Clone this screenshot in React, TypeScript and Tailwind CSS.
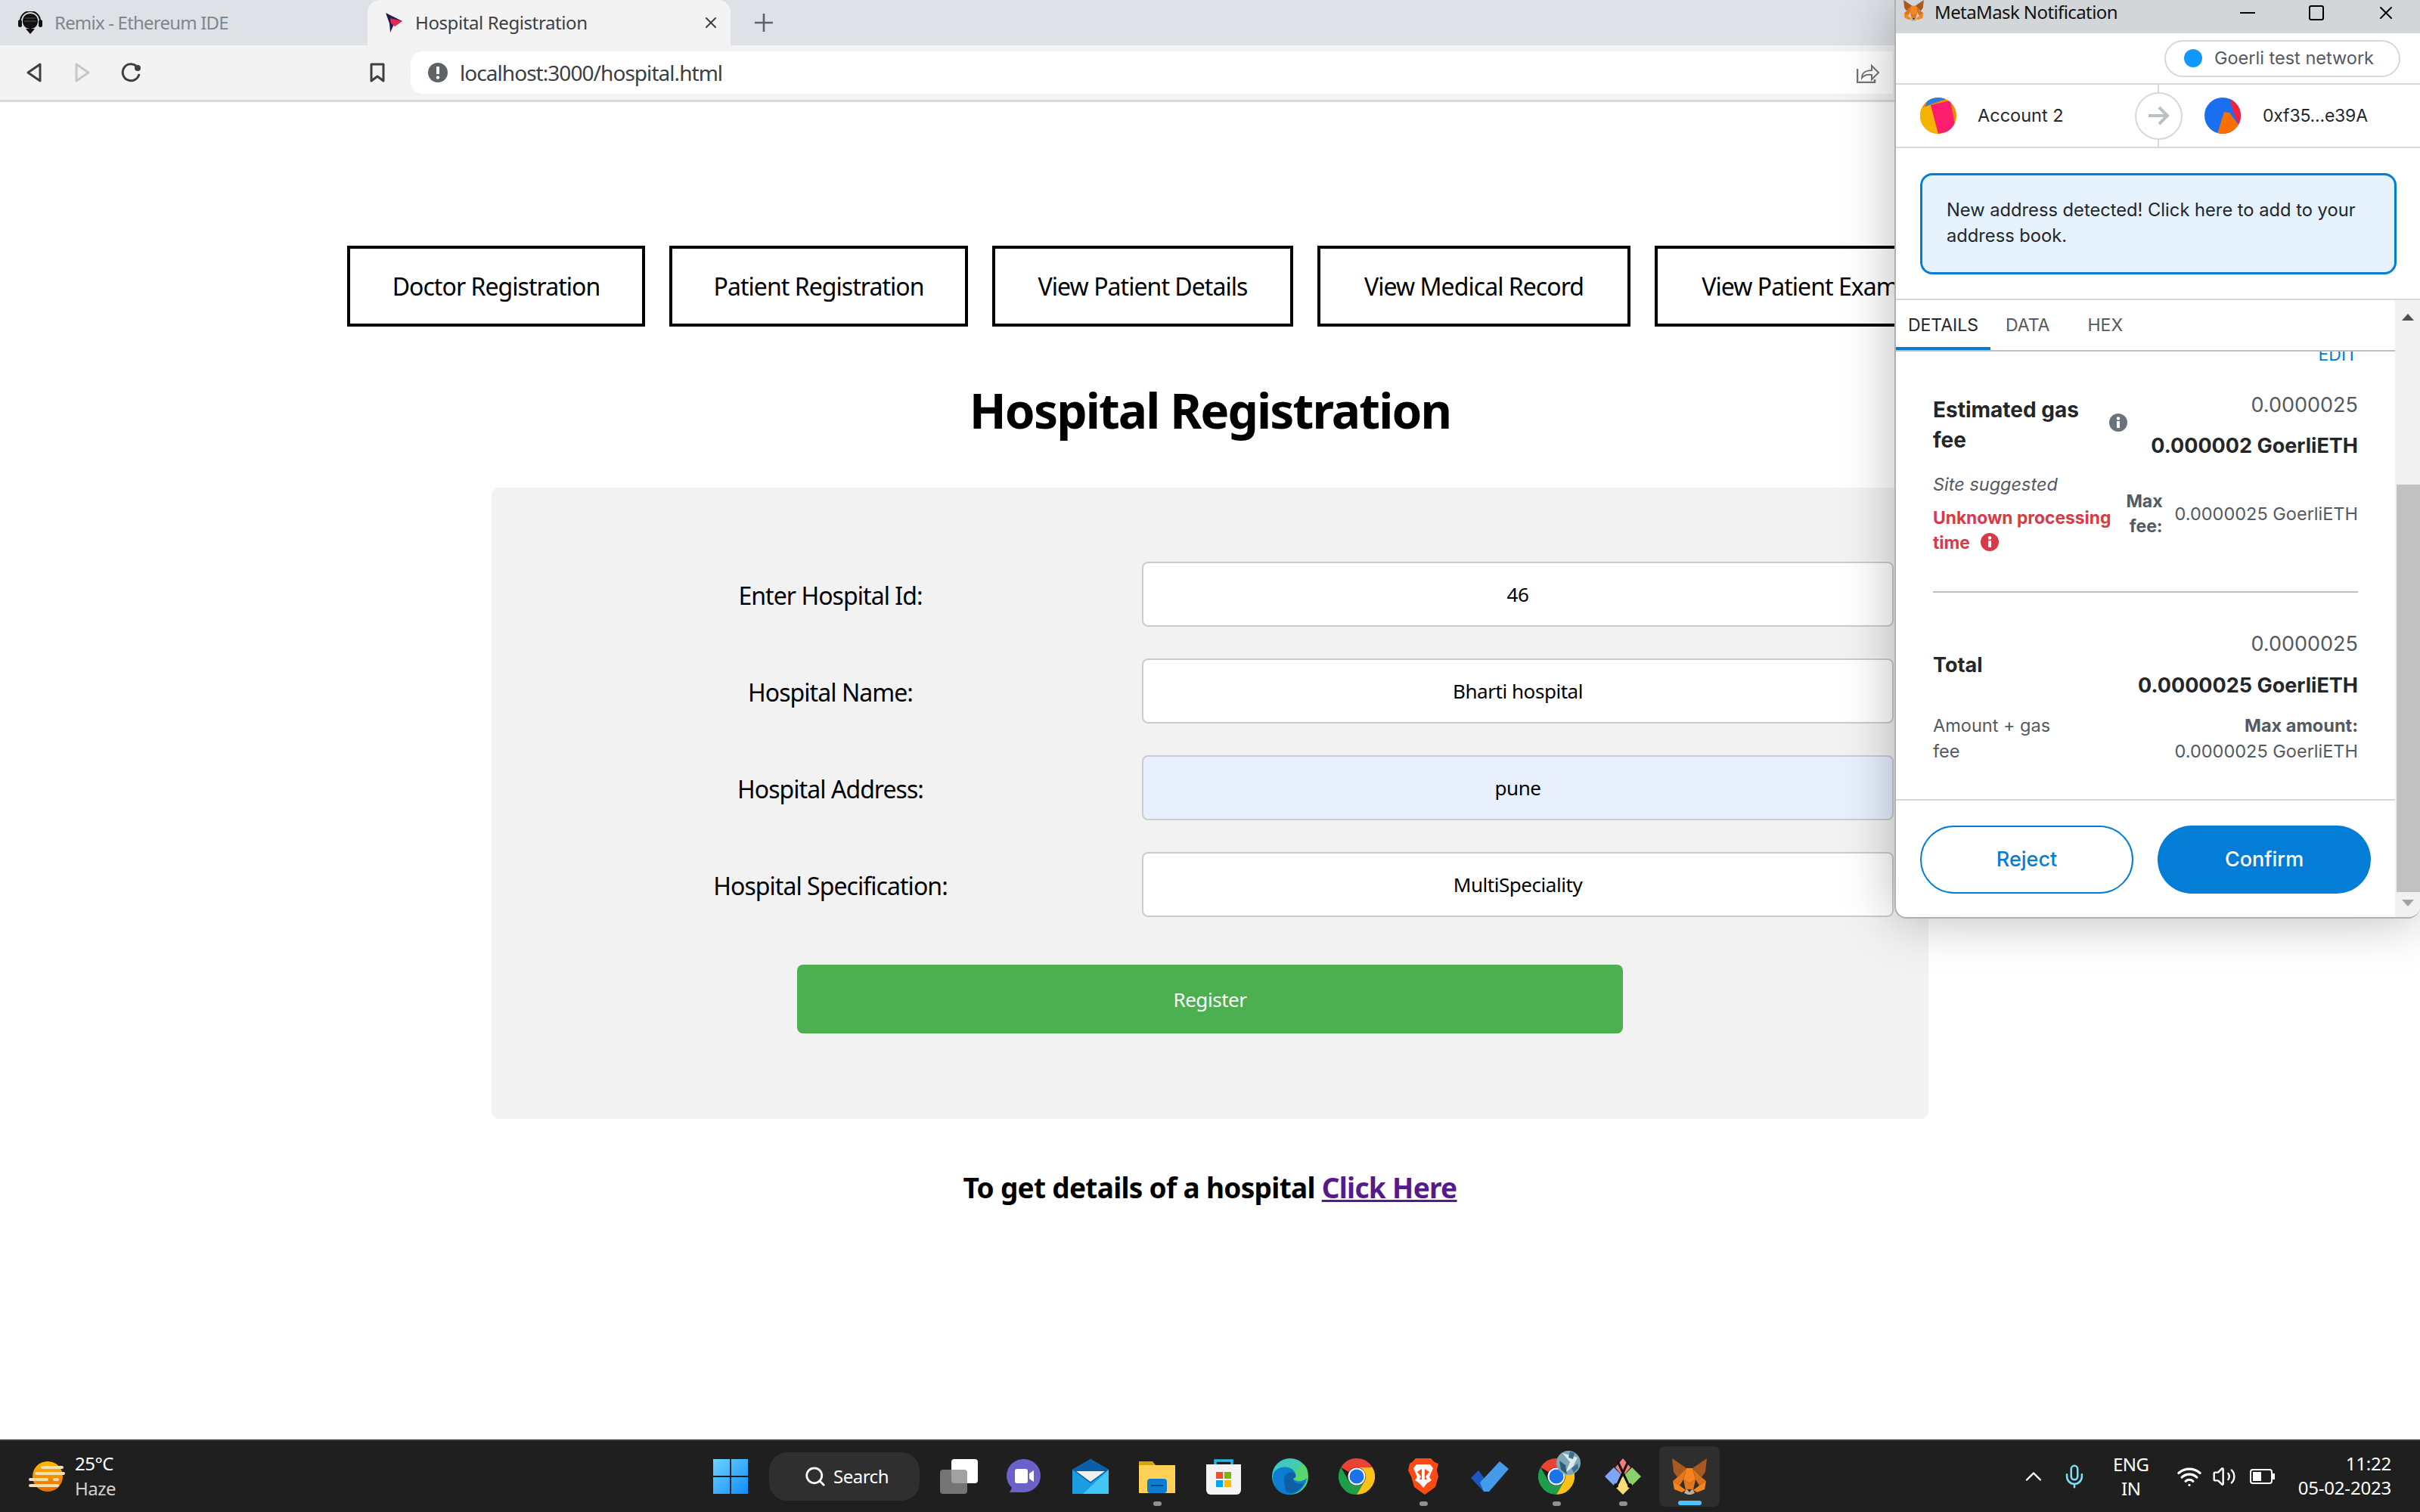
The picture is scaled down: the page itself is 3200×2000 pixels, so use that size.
import React from 'react'
import { ChevronUp, Mic, Search, Volume2, Wifi, X } from 'lucide-react'

function Fox({ className }: { className: string }) {
  return (
    <svg viewBox="0 0 48 48" className={className}>
      <polygon points="1,0 20,13 8,25 3,18" fill="#a9581f" />
      <polygon points="47,0 28,13 40,25 45,18" fill="#a9581f" />
      <polygon points="20,13 28,13 32,28 24,33 16,28" fill="#f5841f" />
      <polygon points="8,25 20,13 16,28 11,36 2,30" fill="#e2761b" />
      <polygon points="40,25 28,13 32,28 37,36 46,30" fill="#d9701a" />
      <polygon points="2,30 11,36 19,42 14,45 4,41" fill="#f6851b" />
      <polygon points="46,30 37,36 29,42 34,45 44,41" fill="#f6851b" />
      <polygon points="16,28 24,33 32,28 29,42 19,42" fill="#e4761b" />
      <polygon points="19,42 29,42 31,46 26,48 22,48 17,46" fill="#c0ad9e" />
      <polygon points="21,41 27,41 24,45" fill="#233447" />
    </svg>
  )
}

function Chrome({ className }: { className: string }) {
  return (
    <svg viewBox="0 0 48 48" className={className}>
      <path d="M24 0A24 24 0 0 1 44.8 12H24a12 12 0 0 0-10.4 6L3.2 12A24 24 0 0 1 24 0z" fill="#ea4335" />
      <path d="M3.2 12A24 24 0 0 0 24 48l10.4-18a12 12 0 0 1-20.8 0z" fill="#1e9e4a" />
      <path d="M44.8 12H24a12 12 0 0 1 10.4 18L24 48A24 24 0 0 0 44.8 12z" fill="#fbc116" />
      <circle cx="24" cy="24" r="11.5" fill="#fff" />
      <circle cx="24" cy="24" r="9.5" fill="#1a73e8" />
    </svg>
  )
}

function InfoDot({ color }: { color: string }) {
  return (
    <svg viewBox="0 0 24 24" className="h-6 w-6 shrink-0">
      <circle cx="12" cy="12" r="12" fill={color} />
      <rect x="10" y="10" width="4" height="9" fill="#fff" />
      <circle cx="12" cy="6.5" r="2.2" fill="#fff" />
    </svg>
  )
}

function Avatar({ which }: { which: 1 | 2 }) {
  return (
    <svg viewBox="0 0 48 48" className="h-12 w-12 shrink-0">
      <clipPath id={`jazz${which}`}>
        <circle cx="24" cy="24" r="24" />
      </clipPath>
      {which === 1 ? (
        <g clipPath="url(#jazz1)">
          <rect width="48" height="48" fill="#f58a00" />
          <polygon points="0,14 14,10 24,48 0,48" fill="#f5b400" />
          <polygon points="14,10 40,4 46,36 40,44 24,48" fill="#fb1d6e" />
          <polygon points="7,12 10,0 34,0 34,2 14,9" fill="#2a7de1" />
        </g>
      ) : (
        <g clipPath="url(#jazz2)">
          <rect width="48" height="48" fill="#1a6ff0" />
          <polygon points="33,0 48,0 48,30 45,36 38,18" fill="#fb1d3a" />
          <polygon points="26,19 33,20 45,36 48,48 17,48" fill="#fb6f00" />
        </g>
      )}
    </svg>
  )
}

function TaskIcon({ children, active, dot }: { children: React.ReactNode; active?: boolean; dot?: boolean }) {
  return (
    <div className={`relative flex h-20 w-20 items-center justify-center rounded-lg ${active ? 'bg-[#2e2e2e]' : ''}`}>
      {children}
      {dot && <div className="absolute bottom-[1px] left-[35px] h-[6px] w-[11px] rounded-full bg-[#8f8f8f]" />}
      {active && <div className="absolute bottom-[2px] left-[25px] h-[6px] w-[31px] rounded-full bg-[#4cc2ff]" />}
    </div>
  )
}

function NavButton({ label, width }: { label: string; width: string }) {
  return (
    <a className={`flex h-[107px] shrink-0 items-center justify-center border-4 border-black pt-[1px] text-[32px] tracking-[-0.95px] text-black ${width}`}>
      {label}
    </a>
  )
}

function FormRow({ label, value, filled }: { label: string; value: string; filled?: boolean }) {
  return (
    <div className="grid grid-cols-[824px_994px] items-center">
      <label className="pt-[4px] text-center text-[32px] tracking-[-0.95px] text-black">{label}</label>
      <input
        readOnly
        defaultValue={value}
        className={`h-[86px] rounded-lg border-2 border-[#ccc] text-center text-[26px] tracking-[-0.45px] text-black outline-none ${filled ? 'bg-[#e8f0fe]' : 'bg-white'}`}
      />
    </div>
  )
}

function BrowserChrome() {
  return (
    <div className="shrink-0">
      <div className="flex h-[60px] items-center bg-[#dee1e6] text-[24px]">
        <div className="flex w-[486px] items-center gap-[16px] pl-[24px] tracking-[-0.8px] text-[#80868b]">
          <svg viewBox="0 0 32 30" className="h-[30px] w-8">
            <path d="M3 13a13 13 0 0 1 26 0" fill="none" stroke="#111" strokeWidth="2" />
            <rect x="0" y="11" width="5" height="10" rx="2.5" fill="#111" />
            <rect x="27" y="11" width="5" height="10" rx="2.5" fill="#111" />
            <path d="M16 3c6 0 10 4 10 10 0 6-4 10-10 10S6 19 6 13C6 7 10 3 16 3z" fill="#111" />
            <path d="M10 23h12l-6 7z" fill="#111" />
            <path d="M9 9h14M8 13h16" stroke="#555" strokeWidth="1" />
          </svg>
          <span>Remix - Ethereum IDE</span>
        </div>
        <div className="flex h-full w-[480px] items-center rounded-t-2xl bg-[#f3f3f3] pl-[20px] tracking-[-0.4px] text-[#3c4043]">
          <svg viewBox="0 0 28 28" className="mr-[15px] h-7 w-7">
            <polygon points="4,1 26,12 15,16 10,27 9,15" fill="#1f1d4d" />
            <polygon points="10,8 26,12 16,19 11,15" fill="#e8264f" />
          </svg>
          <span className="w-[379px]">Hospital Registration</span>
          <X size={24} color="#3c4043" strokeWidth={2} />
        </div>
        <svg viewBox="0 0 24 24" className="ml-[32px] h-6 w-6" stroke="#5f6368" strokeWidth="2.6">
          <path d="M12 0v24M0 12h24" />
        </svg>
      </div>
      <div className="flex h-[75px] items-center border-b-[3px] border-[#d8dadd] bg-[#f3f3f3]">
        <svg viewBox="0 0 20 26" className="ml-[35px] h-[26px] w-5" fill="none" stroke="#3c4043" strokeWidth="3" strokeLinejoin="round">
          <path d="M18 2v22L2 13z" />
        </svg>
        <svg viewBox="0 0 20 26" className="ml-[44px] h-[26px] w-5" fill="none" stroke="#c4c7cb" strokeWidth="3" strokeLinejoin="round">
          <path d="M2 2v22l16-11z" />
        </svg>
        <svg viewBox="0 0 28 26" className="ml-[41px] h-[26px] w-7" fill="none" stroke="#3c4043" strokeWidth="3">
          <path d="M20 4A11 11 0 1 0 24 15" />
          <circle cx="22" cy="7" r="4" fill="#3c4043" stroke="none" />
        </svg>
        <svg viewBox="0 0 20 26" className="ml-[301px] h-[26px] w-5" fill="none" stroke="#3c4043" strokeWidth="3" strokeLinejoin="round">
          <path d="M2 2h16v22l-8-6-8 6z" />
        </svg>
        <div className="ml-[34px] flex h-14 w-[1960px] items-center rounded-l-2xl bg-white pl-[23px] text-[28px] tracking-[-0.95px] text-[#3c4043]">
          <svg viewBox="0 0 26 26" className="mr-[16px] h-[26px] w-[26px]">
            <circle cx="13" cy="13" r="13" fill="#5f6368" />
            <rect x="11" y="5" width="4" height="10" fill="#f3f3f3" />
            <circle cx="13" cy="19.5" r="2.2" fill="#f3f3f3" />
          </svg>
          <span className="flex-1">localhost:3000/hospital.html</span>
          <svg viewBox="0 0 30 27" className="mr-[18px] h-[27px] w-[30px]" fill="none" stroke="#757575" strokeWidth="2">
            <path d="M1 8v18h23v-4" strokeWidth="2.6" />
            <path d="M7 20c0-7 6-10 13-10V4l9 9-9 9v-6c-6-1-10 0-13 4z" />
          </svg>
        </div>
      </div>
    </div>
  )
}

function HospitalPage() {
  return (
    <div className="flex-1 overflow-hidden bg-white pt-[190px]">
      <div className="flex gap-8 pl-[459px]">
        <NavButton label="Doctor Registration" width="w-[394px]" />
        <NavButton label="Patient Registration" width="w-[395px]" />
        <NavButton label="View Patient Details" width="w-[398px]" />
        <NavButton label="View Medical Record" width="w-[414px]" />
        <NavButton label="View Patient Exam" width="w-[384px]" />
      </div>
      <h1 className="mt-[68px] text-center text-[64px] leading-[86px] font-bold tracking-[-1.9px] text-black">
        Hospital Registration
      </h1>
      <div className="mx-auto mt-[59px] flex h-[835px] w-[1900px] flex-col gap-[42px] rounded-[10px] bg-[#f2f2f2] pt-[98px] pl-[36px]">
        <FormRow label="Enter Hospital Id:" value="46" />
        <FormRow label="Hospital Name:" value="Bharti hospital" />
        <FormRow label="Hospital Address:" value="pune" filled />
        <FormRow label="Hospital Specification:" value="MultiSpeciality" />
        <button className="mt-[21px] ml-[368px] h-[91px] w-[1092px] rounded-lg bg-[#4caf50] pt-[2px] text-[26px] tracking-[-0.45px] text-white">
          Register
        </button>
      </div>
      <p className="mt-[66px] text-center text-[37px] leading-[50px] font-bold tracking-[-0.7px] text-black">
        To get details of a hospital <a className="text-[#551a8b] underline">Click Here</a>
      </p>
    </div>
  )
}

function Metamask() {
  return (
    <div className="absolute top-0 left-[2505px] flex h-[1215px] w-[695px] flex-col overflow-hidden rounded-b-2xl border-b-2 border-l-2 border-[#b0b0b0] bg-white font-['Inter',sans-serif] text-[23.5px] text-[#24272a] shadow-[0_0_70px_rgba(0,0,0,0.28)]">
      <div className="flex h-[44px] shrink-0 items-center bg-[#d3d6d9] pb-[10px] pl-[7px] font-['Noto_Sans',sans-serif] text-[24px] tracking-[-0.6px] text-[#111]">
        <Fox className="h-7 w-[33px] self-start" />
        <span className="ml-[11px] w-[404px] pb-[2px]">MetaMask Notification</span>
        <div className="h-[2px] w-5 bg-black" />
        <div className="ml-[71px] h-5 w-5 rounded-[3px] border-2 border-black" />
        <X size={28} color="#000" strokeWidth={1.7} className="ml-[68px]" />
      </div>
      <div className="flex h-[68px] shrink-0 items-center justify-end border-b-2 border-[#d6d9dc] pr-[26px]">
        <div className="flex h-[49px] w-[312px] items-center gap-4 rounded-full border-2 border-[#d6d9dc] pl-6 text-[#535a61]">
          <div className="h-6 w-6 rounded-full bg-[#1098fc]" />
          <span>Goerli test network</span>
        </div>
      </div>
      <div className="relative flex h-[84px] shrink-0 items-center border-b-2 border-[#d6d9dc] pl-8">
        <Avatar which={1} />
        <span className="ml-7 w-[208px]">Account 2</span>
        <div className="relative z-10 flex h-[63px] w-[63px] shrink-0 items-center justify-center rounded-full border-2 border-[#d6d9dc] bg-white">
          <svg viewBox="0 0 28 28" className="h-7 w-7" fill="none" stroke="#bbc0c5" strokeWidth="4">
            <path d="M0 14h24M14 3l11 11-11 11" />
          </svg>
        </div>
        <div className="absolute top-0 left-[346px] h-full w-[2px] bg-[#d6d9dc]" />
        <div className="ml-[29px]">
          <Avatar which={2} />
        </div>
        <span className="ml-[29px] text-[23px] tracking-[-0.2px]">0xf35...e39A</span>
      </div>
      <div className="flex h-[201px] shrink-0 items-center border-b-2 border-[#d6d9dc] pl-8">
        <div className="h-[134px] w-[630px] rounded-2xl border-[3px] border-[#037dd6] bg-[#e5f2fb] px-8 pt-[29px] text-[23.7px] leading-[34px]">
          New address detected! Click here to add to your address book.
        </div>
      </div>
      <div className="flex min-h-0 flex-1">
        <div className="flex w-[660px] flex-col">
          <div className="flex h-[68px] shrink-0 items-center border-b-2 border-[#bbc0c5] text-[23px] text-[#535a61]">
            <div className="relative flex h-full w-[125px] items-center justify-center text-[#24272a]">
              DETAILS
              <div className="absolute right-0 bottom-0 left-0 h-1 bg-[#037dd6]" />
            </div>
            <span className="ml-5">DATA</span>
            <span className="ml-[50px]">HEX</span>
          </div>
          <div className="relative flex flex-1 flex-col overflow-hidden px-[49px]">
            <div className="absolute top-[-13px] right-[50px] text-[23px] text-[#037dd6]">EDIT</div>
            <div className="mt-[46px] flex justify-between">
              <div className="flex items-start pt-[11px]">
                <div className="w-[233px] pr-[30px] text-[28px] leading-[40px] font-bold">Estimated gas fee</div>
                <div className="mt-[25px]">
                  <InfoDot color="#6a737d" />
                </div>
              </div>
              <div className="flex flex-col items-end">
                <span className="text-[27px] leading-[50px] text-[#535a61]">0.0000025</span>
                <span className="text-[27px] leading-[58px] font-bold">0.000002 GoerliETH</span>
              </div>
            </div>
            <div className="mt-[5px] flex justify-between">
              <div className="w-[240px]">
                <div className="text-[23.5px] leading-[34px] text-[#535a61] italic">Site suggested</div>
                <div className="mt-[10px] text-[22.8px] leading-[33px] font-bold text-[#d73a49]">
                  Unknown processing time
                  <span className="ml-[14px] inline-block align-[-3px]">
                    <InfoDot color="#d73a49" />
                  </span>
                </div>
              </div>
              <div className="mt-[23px] flex h-[66px] items-center gap-4">
                <div className="w-[60px] text-right text-[23px] leading-[33px] font-bold text-[#535a61]">Max fee:</div>
                <span className="text-[#535a61]">0.0000025 GoerliETH</span>
              </div>
            </div>
            <div className="mt-[48px] h-[2px] shrink-0 bg-[#bbc0c5]" />
            <div className="mt-[43px] flex items-center justify-between">
              <div className="pb-[4px] text-[27px] font-bold">Total</div>
              <div className="flex flex-col items-end">
                <span className="text-[27px] leading-[50px] text-[#535a61]">0.0000025</span>
                <span className="text-[27px] leading-[60px] font-bold">0.0000025 GoerliETH</span>
              </div>
            </div>
            <div className="mt-[6px] flex justify-between leading-[34px] text-[#535a61]">
              <div className="w-[180px]">Amount + gas fee</div>
              <div className="text-right">
                <div className="font-bold">Max amount:</div>
                <div>0.0000025 GoerliETH</div>
              </div>
            </div>
          </div>
          <div className="flex h-[156px] shrink-0 gap-8 border-t-2 border-[#d6d9dc] pt-[33px] pl-8 text-[27px] font-medium">
            <button className="h-[90px] w-[282px] rounded-full border-2 border-[#037dd6] text-[#037dd6]">Reject</button>
            <button className="h-[90px] w-[282px] rounded-full bg-[#037dd6] text-white">Confirm</button>
          </div>
        </div>
        <div className="relative w-[33px] bg-[#f1f1f1]">
          <div className="absolute top-[18px] left-[9px] h-0 w-0 border-x-[8px] border-b-[9px] border-x-transparent border-b-[#505050]" />
          <div className="absolute top-[244px] right-0 h-[539px] w-[31px] bg-[#c1c1c1]" />
          <div className="absolute top-[793px] left-[9px] h-0 w-0 border-x-[8px] border-t-[9px] border-x-transparent border-t-[#a3a3a3]" />
        </div>
      </div>
    </div>
  )
}

function Taskbar() {
  return (
    <div className="flex h-[96px] shrink-0 items-center border-t-2 border-[#3a3a3a] bg-[#1f1f1f] text-[24px] tracking-[-0.5px] text-white">
      <div className="flex w-[943px] shrink-0 items-center pl-[38px]">
        <svg viewBox="0 0 48 40" className="h-10 w-12">
          <defs>
            <linearGradient id="sun" x1="0" y1="0" x2="0" y2="1">
              <stop offset="0" stopColor="#ffb900" />
              <stop offset="1" stopColor="#e86a00" />
            </linearGradient>
          </defs>
          <circle cx="25" cy="20" r="20" fill="url(#sun)" />
          <g fill="#f3dfb4">
            <rect x="16" y="6" width="30" height="4" rx="2" />
            <rect x="8" y="14" width="40" height="4" rx="2" />
            <rect x="0" y="22" width="26" height="4" rx="2" />
            <rect x="32" y="22" width="8" height="4" rx="2" />
            <rect x="0" y="30" width="40" height="4" rx="2" />
          </g>
        </svg>
        <div className="ml-[13px] flex flex-col pb-[3px] leading-[33px]">
          <span>25°C</span>
          <span className="text-[#d0d0d0]">Haze</span>
        </div>
      </div>
      <div className="flex items-center">
        <svg viewBox="0 0 46 46" className="h-[46px] w-[46px]">
          <defs>
            <linearGradient id="win" x1="0" y1="0" x2="1" y2="1">
              <stop offset="0" stopColor="#6fd3ff" />
              <stop offset="1" stopColor="#0f8cff" />
            </linearGradient>
          </defs>
          <path d="M0 0h22v22H0zM24 0h22v22H24zM0 24h22v22H0zM24 24h22v22H24z" fill="url(#win)" />
        </svg>
        <div className="ml-[28px] flex h-16 w-[199px] items-center rounded-3xl bg-[#2f2f2f] pl-[46px]">
          <Search size={30} strokeWidth={2.2} color="#fff" />
          <span className="ml-[9px]">Search</span>
        </div>
        <div className="relative ml-[27px] h-[46px] w-[50px]">
          <div className="absolute right-0 top-0 h-[32px] w-[35px] rounded-sm bg-white" />
          <div className="absolute bottom-0 left-0 h-[32px] w-[36px] rounded-sm bg-[#8a8a8a]/80" />
        </div>
        <div className="ml-[21px] flex items-center gap-2">
          <TaskIcon>
            <svg viewBox="0 0 46 46" className="h-[46px] w-[46px]">
              <path d="M23 0a22 22 0 0 1 0 44H4l3-6A22 22 0 0 1 23 0z" fill="#6a62c9" />
              <rect x="11" y="13" width="17" height="19" rx="3" fill="#fff" />
              <path d="M30 19l6-4v15l-6-4z" fill="#fff" />
            </svg>
          </TaskIcon>
          <TaskIcon>
            <svg viewBox="0 0 48 46" className="h-[46px] w-12">
              <path d="M0 14L24 0l24 14v32H0z" fill="#1b9de2" />
              <path d="M0 14L24 0l24 14-24 18z" fill="#0b5fa8" />
              <path d="M5 16h38L24 30z" fill="#f0f0f0" />
              <path d="M48 14v32H14z" fill="#41c6f5" />
            </svg>
          </TaskIcon>
          <TaskIcon dot>
            <svg viewBox="0 0 48 44" className="h-11 w-12">
              <path d="M0 2h18l4 5h26v37H0z" fill="#d9a300" />
              <rect y="7" width="48" height="37" rx="1" fill="#ffd257" />
              <rect x="11" y="25" width="26" height="19" rx="4" fill="#0d7cd1" />
              <rect x="16" y="33" width="16" height="2" fill="#0a4e86" />
            </svg>
          </TaskIcon>
          <TaskIcon>
            <svg viewBox="0 0 46 48" className="h-12 w-[46px]">
              <path d="M12 12V3h22v9" fill="none" stroke="#25b5f0" strokeWidth="3.5" />
              <path d="M0 8h46v34a6 6 0 0 1-6 6H6a6 6 0 0 1-6-6z" fill="#f4f4f4" />
              <rect x="13" y="18" width="9" height="9" fill="#e8532b" />
              <rect x="24" y="18" width="9" height="9" fill="#7db800" />
              <rect x="13" y="29" width="9" height="9" fill="#00a4ef" />
              <rect x="24" y="29" width="9" height="9" fill="#ffb900" />
            </svg>
          </TaskIcon>
          <TaskIcon>
            <svg viewBox="0 0 48 48" className="h-12 w-12">
              <defs>
                <linearGradient id="edge" x1="0" y1="0" x2="1" y2="1">
                  <stop offset="0" stopColor="#37c5d8" />
                  <stop offset="1" stopColor="#58d76b" />
                </linearGradient>
              </defs>
              <circle cx="24" cy="24" r="24" fill="url(#edge)" />
              <path d="M2 20C6 10 24 8 30 18c3 6-2 9-2 9 6 6 14 3 18-1-2 13-13 22-24 22C8 48-2 34 2 20z" fill="#0c7ed1" />
              <path d="M16 28c0-8 8-12 14-8 3 2 1 7-2 7 0 6 8 8 14 6-5 10-14 15-22 12-3-4-4-11-4-17z" fill="#0f5ea8" />
              <path d="M30 18c4 2 4 7-2 9 5 5 14 3 18-1 3-9 0-14-4-18z" fill="#5ad56a" opacity="0.9" />
            </svg>
          </TaskIcon>
          <TaskIcon>
            <Chrome className="h-12 w-12" />
          </TaskIcon>
          <TaskIcon dot>
            <svg viewBox="0 0 40 48" className="h-12 w-10">
              <path d="M10 0h20l5 5 5 2-2 9 2 8-4 14-14 10L8 38 4 24 0 16l2-9 3-2z" fill="#fb4a16" />
              <path d="M11 8h18l4 5-3 7-2 5 3 4-6 4-5 6-5-6-6-4 3-4-2-5-3-7z" fill="#fff" />
              <path d="M18 14l-6 4 5 6-2 4h10l-2-4 5-6-6-4v14h-4z" fill="#fb4a16" />
            </svg>
          </TaskIcon>
          <TaskIcon>
            <svg viewBox="0 0 50 40" className="h-10 w-[50px]">
              <polygon points="0,22 10,12 22,28 17,40" fill="#1b57c1" />
              <polygon points="38,0 50,10 24,40 17,40 12,28" fill="#439be9" />
            </svg>
          </TaskIcon>
          <TaskIcon dot>
            <Chrome className="h-12 w-12" />
            <svg viewBox="0 0 32 34" className="absolute top-[5px] left-[40px] h-[34px] w-8">
              <circle cx="16" cy="17" r="16" fill="#7fa7b5" />
              <path d="M8 4l10 12-6 14 10-8 6-12z" fill="#dfe9ec" />
              <path d="M4 14l8 6 2 12-8-6z" fill="#2f5a78" />
              <path d="M18 2l6 2-2 8-6-2zM20 24l8-6 1 6-6 6z" fill="#3f6f8c" />
            </svg>
          </TaskIcon>
          <TaskIcon dot>
            <svg viewBox="0 0 48 48" className="h-12 w-12">
              <polygon points="24,0 34,12 24,24 14,12" fill="#f47c7c" />
              <polygon points="0,24 12,12 24,24 12,36" fill="#7fa6f5" />
              <polygon points="48,24 36,12 24,24 36,36" fill="#8bd16b" />
              <polygon points="24,48 12,36 24,24 36,36" fill="#f7dc7a" />
              <path d="M17 4l14 30M31 4L17 34" stroke="#111" strokeWidth="3" />
              <circle cx="15" cy="36" r="3" fill="#111" />
              <circle cx="33" cy="36" r="3" fill="#111" />
            </svg>
          </TaskIcon>
          <TaskIcon active>
            <Fox className="h-12 w-12" />
          </TaskIcon>
        </div>
      </div>
      <div className="ml-auto flex items-center pr-[38px]">
        <ChevronUp size={36} strokeWidth={1.6} color="#fff" />
        <Mic size={34} strokeWidth={1.8} color="#7fdcf5" className="ml-[19px]" />
        <div className="ml-[35px] flex w-[46px] flex-col items-center leading-[32px]">
          <span>ENG</span>
          <span>IN</span>
        </div>
        <Wifi size={34} strokeWidth={2.2} color="#fff" className="ml-[37px]" />
        <Volume2 size={32} strokeWidth={1.8} color="#fff" className="ml-[13px]" />
        <div className="relative ml-[18px] h-5 w-[30px] rounded-[4px] border-2 border-white">
          <div className="absolute top-[2px] bottom-[2px] left-[2px] w-[11px] bg-white" />
          <div className="absolute top-[4px] right-[-5px] h-2 w-[3px] bg-white" />
        </div>
        <div className="ml-[34px] flex flex-col items-end pb-[3px] leading-[32px] tracking-[-0.2px]">
          <span>11:22</span>
          <span>05-02-2023</span>
        </div>
      </div>
    </div>
  )
}

export default function App() {
  return (
    <div className="relative flex h-[2000px] w-[3200px] flex-col overflow-hidden bg-white font-['Noto_Sans',sans-serif]">
      <BrowserChrome />
      <HospitalPage />
      <Taskbar />
      <Metamask />
    </div>
  )
}
